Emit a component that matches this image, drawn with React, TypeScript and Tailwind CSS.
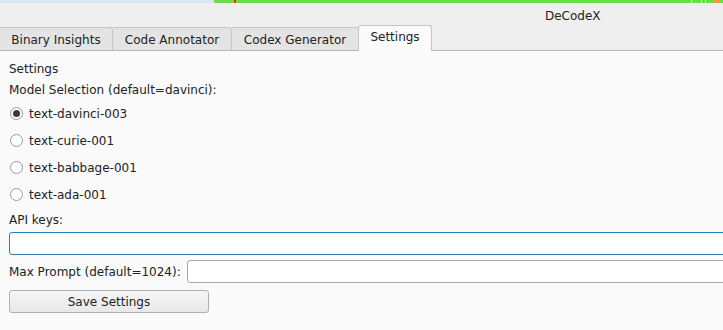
import React from "react";

const font = { fontFamily: '"DejaVu Sans", sans-serif' };

function Radio({ checked, label }: { checked?: boolean; label: string }) {
  return (
    <div className="flex items-center h-[27px]">
      <div className="w-[13px] h-[13px] rounded-full border border-[#9a9a9a] bg-white flex items-center justify-center ml-[10px] mr-[6px]">
        {checked && <div className="w-[7px] h-[7px] rounded-full bg-[#3a3a3a]" />}
      </div>
      <span>{label}</span>
    </div>
  );
}

export default function App() {
  return (
    <div className="w-[723px] h-[330px] overflow-hidden bg-[#efefef] text-[12px] text-[#222]" style={font}>
      <div className="flex h-[3px]">
        <div className="w-[214px] bg-[#dae7f2]" />
        <div className="flex-1 bg-[#6ddc4c] relative">
          <div className="absolute left-[20px] top-0 w-[2px] h-[3px] bg-[#e53020]" />
          <div className="absolute left-[477px] top-0 w-[1px] h-[3px] bg-[#cfe8c4]" />
          <div className="absolute left-[487px] top-0 w-[1px] h-[3px] bg-[#cfe8c4]" />
          <div className="absolute left-[491px] top-0 w-[1px] h-[3px] bg-[#cfe8c4]" />
          <div className="absolute left-[499px] top-0 w-[6px] h-[3px] bg-[#ef9a4a]" />
        </div>
      </div>
      <div className="h-[22px] pt-[4px] flex items-center">
        <span className="ml-[545px]">DeCodeX</span>
      </div>
      <div className="flex items-end h-[26px] border-b border-[#b8b8b8]">
        <div className="w-[113px] h-[23px] pt-[1px] flex items-center justify-center bg-[#e4e4e4] border border-l-0 border-b-0 border-[#c4c4c4] rounded-tr-[3px]">
          Binary Insights
        </div>
        <div className="w-[119px] h-[23px] pt-[1px] flex items-center justify-center bg-[#e4e4e4] border border-l-0 border-b-0 border-[#c4c4c4] rounded-tr-[3px]">
          Code Annotator
        </div>
        <div className="w-[127px] h-[23px] pt-[1px] flex items-center justify-center bg-[#e4e4e4] border border-l-0 border-b-0 border-[#c4c4c4] rounded-tr-[3px]">
          Codex Generator
        </div>
        <div className="w-[74px] h-[26px] flex items-center justify-center bg-[#fafafa] border border-b-0 border-[#c4c4c4] rounded-t-[3px] -mb-[1px] -ml-[1px] pb-[3px]">
          Settings
        </div>
      </div>
      <div className="bg-[#fafafa] h-full pl-[9px] pt-[8px]">
        <div className="h-[20px] flex items-center">Settings</div>
        <div className="h-[21px] flex items-center">Model Selection (default=davinci):</div>
        <div className="-ml-[9px]">
          <Radio checked label="text-davinci-003" />
          <Radio label="text-curie-001" />
          <Radio label="text-babbage-001" />
          <Radio label="text-ada-001" />
        </div>
        <div className="h-[23px] flex items-center">API keys:</div>
        <div className="h-[23px] mt-[1px] -mr-[10px] border border-[#2f7bb5] rounded-[3px] bg-white" />
        <div className="flex items-center mt-[5px] h-[23px]">
          <span className="mr-[6px]">Max Prompt (default=1024):</span>
          <div className="flex-1 -mr-[10px] h-[23px] border border-[#a8a8a8] rounded-[3px] bg-white" />
        </div>
        <div className="w-[200px] h-[23px] mt-[7px] border border-[#b0b0b0] rounded-[3px] bg-gradient-to-b from-[#f6f6f6] to-[#e8e8e8] flex items-center justify-center">
          Save Settings
        </div>
      </div>
    </div>
  );
}
